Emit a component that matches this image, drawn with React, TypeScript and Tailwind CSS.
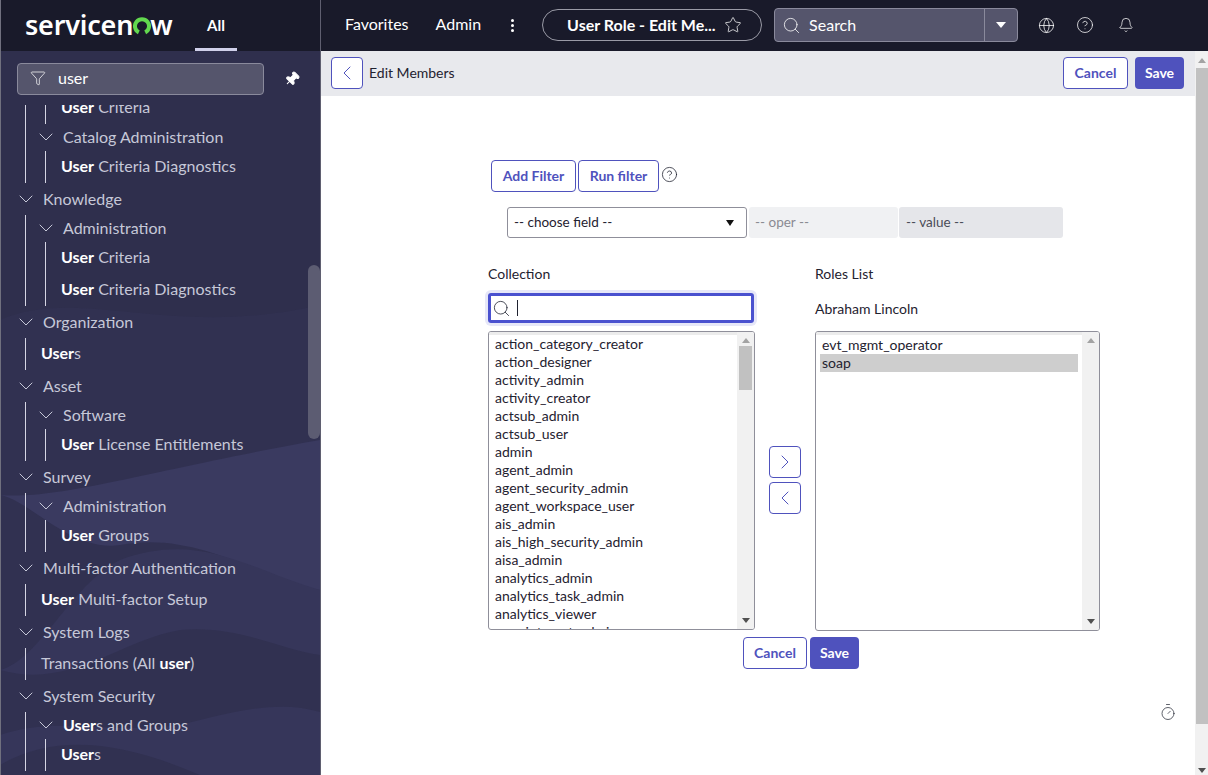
import React from "react";
import { Star, Search, Globe, CircleHelp, Bell, Timer, Pin, ChevronDown, ChevronLeft, ChevronRight, Funnel } from "lucide-react";

const collection = [
  "action_category_creator", "action_designer", "activity_admin", "activity_creator", "actsub_admin", "actsub_user", "admin",
  "agent_admin", "agent_security_admin", "agent_workspace_user", "ais_admin", "ais_high_security_admin", "aisa_admin",
  "analytics_admin", "analytics_task_admin", "analytics_viewer", "appointment_admin",
];

function Hit({ text }: { text: string }) {
  return <span className="font-bold text-white">{text}</span>;
}

function Row({ h, children, indent = "" }: { h: string; children: React.ReactNode; indent?: string }) {
  return <div className={`flex items-center whitespace-nowrap ${h} ${indent}`}>{children}</div>;
}

function Group({ label, children }: { label: React.ReactNode; children: React.ReactNode }) {
  return (
    <div>
      <Row h="h-8">
        <ChevronDown size={24} strokeWidth={1} className="ml-[14px] mr-[5px] shrink-0" />
        <span>{label}</span>
      </Row>
      <div className="ml-[25px] border-l border-[#d5d5e3] pl-0">{children}</div>
    </div>
  );
}

function Sub({ label, children }: { label: React.ReactNode; children: React.ReactNode }) {
  return (
    <div>
      <Row h="h-[27px]" indent="pb-[2px]">
        <ChevronDown size={24} strokeWidth={1} className="ml-[8px] mr-[5px] shrink-0" />
        <span>{label}</span>
      </Row>
      <div className="ml-[19px] border-l border-[#d5d5e3]">{children}</div>
    </div>
  );
}

function Leaf({ children }: { children: React.ReactNode }) {
  return <Row h="h-8" indent="pb-[2px] pl-[15px]">{children}</Row>;
}

function Waves() {
  return (
    <svg className="absolute inset-0 h-full w-full" viewBox="0 0 320 775" preserveAspectRatio="none">
      <path d="M0 320 C80 285 170 340 320 305 L320 775 L0 775 Z" fill="#313151" />
      <path d="M0 495 C60 500 150 470 320 440 L320 590 C260 580 200 530 120 545 C70 552 30 500 0 495 Z" fill="#3a3a60" />
      <path d="M0 670 C70 690 120 640 180 630 C240 625 280 650 320 655 L320 590 C250 570 200 530 120 560 C70 585 40 660 0 670 Z" fill="#36365a" />
      <path d="M0 735 C60 715 100 735 180 725 C240 710 280 700 320 712 L320 775 L200 775 C130 745 60 730 0 765 Z" fill="#36365a" />
    </svg>
  );
}

function Sidebar() {
  return (
    <aside className="relative flex w-[321px] shrink-0 flex-col overflow-hidden border-r border-[#5f5f70] bg-[#2f2f4d] text-base text-[#c6c8d8]">
      <Waves />
      <div className="relative flex h-[51px] shrink-0 bg-[#191a2a]">
        <div className="ml-[25px] flex h-[48px] w-[170px] items-center">
          <span className="flex items-center text-[27px] font-semibold leading-none tracking-[-0.2px] text-white font-['Noto_Sans',sans-serif]">
            servicen
            <svg width="18" height="18" viewBox="0 0 18 18" className="mx-[-0.5px] mt-[4px]">
              <path d="M5.8 15.4 A7 7 0 1 1 12.2 15.4" fill="none" stroke="#62d84e" strokeWidth="4" />
            </svg>
            w
          </span>
        </div>
        <div className="flex w-[42px] flex-col items-center justify-center border-b-[3px] border-[#d0d0ea] pt-[3px] text-[15px] font-bold text-white">All</div>
      </div>
      <div className="relative z-10 flex items-center pl-[17px] pt-3">
        <div className="flex h-8 w-[247px] items-center rounded border border-[#8a8a9c] bg-[#55556c] pb-[3px] text-base text-white">
          <Funnel size={16} strokeWidth={1.1} className="ml-[12px] mr-[12px]" />
          user
        </div>
        <Pin size={16} fill="white" strokeWidth={1.5} className="ml-[20px] rotate-45 text-white" />
      </div>
      <div className="relative mt-[10px] min-h-0 flex-1 overflow-hidden">
        <div className="-mt-[13px]">
          <div className="ml-[25px] border-l border-[#d5d5e3]">
            <div className="ml-[19px] border-l border-[#d5d5e3]">
              <Leaf><Hit text="User" />&nbsp;Criteria</Leaf>
            </div>
            <Sub label="Catalog Administration">
              <Leaf><Hit text="User" />&nbsp;Criteria Diagnostics</Leaf>
            </Sub>
          </div>
          <Group label="Knowledge">
            <Sub label="Administration">
              <Leaf><Hit text="User" />&nbsp;Criteria</Leaf>
              <Leaf><Hit text="User" />&nbsp;Criteria Diagnostics</Leaf>
            </Sub>
          </Group>
          <Group label="Organization">
            <Leaf><Hit text="User" />s</Leaf>
          </Group>
          <Group label="Asset">
            <Sub label="Software">
              <Leaf><Hit text="User" />&nbsp;License Entitlements</Leaf>
            </Sub>
          </Group>
          <Group label="Survey">
            <Sub label="Administration">
              <Leaf><Hit text="User" />&nbsp;Groups</Leaf>
            </Sub>
          </Group>
          <Group label="Multi-factor Authentication">
            <Leaf><Hit text="User" />&nbsp;Multi-factor Setup</Leaf>
          </Group>
          <Group label="System Logs">
            <Leaf>Transactions (All&nbsp;<Hit text="user" />)</Leaf>
          </Group>
          <Group label="System Security">
            <Sub label={<><Hit text="User" />s and Groups</>}>
              <Leaf><Hit text="User" />s</Leaf>
            </Sub>
          </Group>
        </div>
      </div>
      <div className="absolute left-[308px] top-[265px] h-[174px] w-3 rounded-md bg-[#5c5c72]" />
      <div className="absolute left-0 top-0 z-10 h-full w-px bg-[#70707e]" />
    </aside>
  );
}

function TopBar() {
  return (
    <header className="flex h-[51px] shrink-0 items-center bg-[#191a2a] pb-px pl-6 text-white">
      <span className="mb-[2px] text-base">Favorites</span>
      <span className="mb-[2px] ml-[27px] text-base">Admin</span>
      <span className="ml-[28px] flex w-[6px] flex-col items-center gap-[2px]">
        <i className="h-[3px] w-[3px] rounded-full bg-white" />
        <i className="h-[3px] w-[3px] rounded-full bg-white" />
        <i className="h-[3px] w-[3px] rounded-full bg-white" />
      </span>
      <div className="ml-[27px] flex h-8 w-[220px] items-center rounded-full border border-[#9a9aa6] pl-6 text-base font-bold">
        User Role - Edit Me...
        <Star size={18} strokeWidth={1} className="ml-[8px]" />
      </div>
      <div className="ml-3 flex h-[34px] w-[244px] items-center rounded border border-[#8a8a9c] bg-[#55556c]">
        <Search size={19} strokeWidth={1} className="ml-[7px] mr-[8px]" />
        <span className="flex-1 text-base text-white">Search</span>
        <span className="flex h-full w-[33px] items-center justify-center border-l border-[#8a8a9c]">
          <span className="h-0 w-0 border-x-[5px] border-t-[6px] border-x-transparent border-t-white" />
        </span>
      </div>
      <Globe size={17} strokeWidth={1.1} className="ml-[20px]" />
      <CircleHelp size={18} strokeWidth={1} className="ml-[21px]" />
      <Bell size={16} strokeWidth={1.1} className="ml-[24px]" />
    </header>
  );
}

function OutlineBtn({ children, cls }: { children: React.ReactNode; cls: string }) {
  return (
    <button className={`flex h-8 items-center justify-center rounded border border-[#4f52bd] bg-white pb-px text-sm font-bold text-[#4f52bd] ${cls}`}>
      {children}
    </button>
  );
}

function SaveBtn({ cls = "" }: { cls?: string }) {
  return <button className={`flex h-8 w-[49px] items-center justify-center rounded bg-[#4f52bd] pb-px text-sm font-bold text-white ${cls}`}>Save</button>;
}

function TinyArrow({ dir, cls = "" }: { dir: "up" | "down"; cls?: string }) {
  return (
    <span className={`h-0 w-0 border-x-[4px] border-x-transparent ${dir === "up" ? "border-b-[5px] border-b-[#a3a3a3]" : "border-t-[5px] border-t-[#505050]"} ${cls}`} />
  );
}

function ListBox({ w, h, children, thumb, pad }: { w: string; h: string; children: React.ReactNode; thumb: boolean; pad: string }) {
  return (
    <div className={`flex overflow-hidden rounded-[3px] border border-[#8f8f9a] bg-white ${w} ${h}`}>
      <div className={`min-w-0 flex-1 overflow-hidden border-t-[3px] border-t-[#ececec] px-1 text-sm leading-[18px] text-[#1f2230] ${pad}`}>{children}</div>
      <div className="flex w-[17px] shrink-0 flex-col items-center bg-[#f1f1f1]">
        <TinyArrow dir="up" cls="mt-[6px]" />
        {thumb ? <div className="mt-[3px] h-[44px] w-[13px] bg-[#c1c1c1]" /> : null}
        <div className="flex-1" />
        <TinyArrow dir="down" cls="mb-[6px]" />
      </div>
    </div>
  );
}

function Main() {
  return (
    <div className="flex min-h-0 flex-1">
      <div className="flex min-w-0 flex-1 flex-col bg-white">
        <div className="flex h-[45px] shrink-0 items-start bg-[#e8e9ed] pl-[10px] pr-[11px] pt-[6px]">
          <OutlineBtn cls="w-8"><ChevronLeft size={24} strokeWidth={1} /></OutlineBtn>
          <span className="ml-[6px] flex-1 text-sm leading-[32px] text-[#1f2230]">Edit Members</span>
          <OutlineBtn cls="w-[65px]">Cancel</OutlineBtn>
          <SaveBtn cls="ml-[7px]" />
        </div>
        <div className="relative flex-1 pl-[167px] pt-[64px] text-sm text-[#1f2230]">
          <div className="ml-[3px] flex items-center gap-[2px]">
            <OutlineBtn cls="w-[85px]">Add Filter</OutlineBtn>
            <OutlineBtn cls="w-[81px]">Run filter</OutlineBtn>
            <CircleHelp size={17} strokeWidth={1.1} className="-mt-[3px] text-[#1f2230]" />
          </div>
          <div className="ml-[19px] mt-[15px] flex h-[31px] text-[13.5px]">
            <div className="flex w-[240px] items-center justify-between rounded-[3px] border border-[#8f8f9a] bg-white pl-[6px] pr-[12px]">
              -- choose field --
              <span className="h-0 w-0 border-x-[4.5px] border-t-[6px] border-x-transparent border-t-[#111]" />
            </div>
            <div className="ml-[2px] flex w-[149px] items-center rounded-[3px] bg-[#f0f1f3] pl-[6px] text-[#8a8a92]">-- oper --</div>
            <div className="ml-[1px] flex w-[164px] items-center rounded-[3px] bg-[#e5e6ea] pl-[7px] text-[#4a4c57]">-- value --</div>
          </div>
          <div className="mt-[26px] flex">
            <div className="flex w-[267px] flex-col">
              <div className="h-[18px] leading-[20px]">Collection</div>
              <div className="mt-[11px] flex h-[30px] w-[266px] items-center rounded-[3px] border-[3px] border-[#4a51cf] shadow-[0_0_0_3px_#e6e7f8]">
                <Search size={19} strokeWidth={1} className="ml-[0.5px]" />
                <span className="ml-[6px] h-[16px] w-px bg-[#1f2230]" />
              </div>
              <div className="mt-2">
                <ListBox w="w-[267px]" h="h-[299px]" thumb pad="">
                  {collection.map((c) => (
                    <div key={c} className="h-[18px] whitespace-nowrap pl-[2px]">{c}</div>
                  ))}
                </ListBox>
              </div>
              <div className="ml-[255px] mt-[7px] flex w-[130px] gap-[3px]">
                <OutlineBtn cls="w-[64px] shrink-0">Cancel</OutlineBtn>
                <SaveBtn cls="shrink-0" />
              </div>
            </div>
            <div className="flex w-[60px] flex-col items-center pt-[182px]">
              <OutlineBtn cls="w-8 shrink-0"><ChevronRight size={24} strokeWidth={1} /></OutlineBtn>
              <OutlineBtn cls="w-8 shrink-0 mt-1"><ChevronLeft size={24} strokeWidth={1} /></OutlineBtn>
            </div>
            <div className="flex w-[285px] flex-col">
              <div className="h-[18px] leading-[20px]">Roles List</div>
              <div className="mt-[18px] h-[18px] leading-[18px]">Abraham Lincoln</div>
              <div className="mt-[13px]">
                <ListBox w="w-[285px]" h="h-[300px]" thumb={false} pad="pt-px">
                  <div className="h-[18px] pl-[2px]">evt_mgmt_operator</div>
                  <div className="h-[18px] bg-[#cecece] pl-[2px]">soap</div>
                </ListBox>
              </div>
            </div>
          </div>
          <Timer size={18} strokeWidth={1} className="absolute left-[838px] top-[607px] text-[#2a2d3a]" />
        </div>
      </div>
      <div className="flex w-[13px] shrink-0 flex-col items-center bg-[#f1f1f1]">
        <TinyArrow dir="up" cls="mt-[7px]" />
        <div className="mt-[5px] h-[656px] w-[12px] bg-[#c1c1c1]" />
        <div className="flex-1" />
        <TinyArrow dir="down" cls="mb-[2px]" />
      </div>
    </div>
  );
}

export default function App() {
  return (
    <div className="flex h-[775px] w-[1208px] overflow-hidden bg-white font-['Lato',sans-serif]">
      <Sidebar />
      <div className="flex min-w-0 flex-1 flex-col">
        <TopBar />
        <Main />
      </div>
    </div>
  );
}
